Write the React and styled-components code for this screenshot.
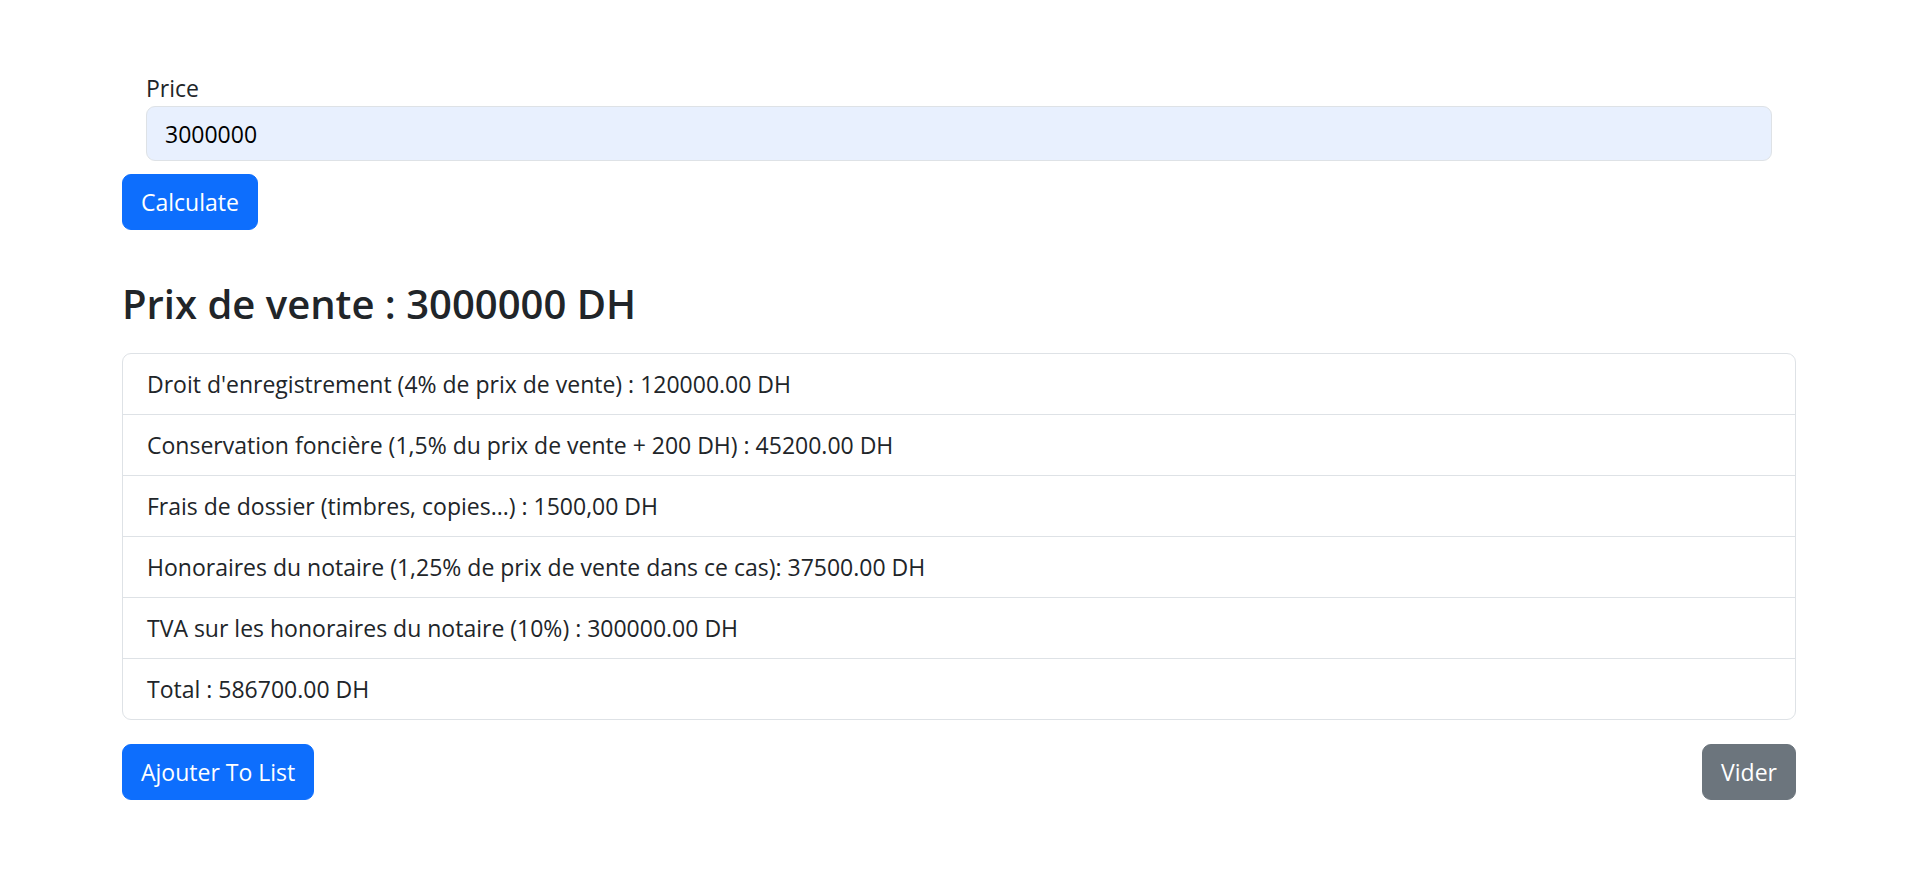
import React from "react";
import styled, { createGlobalStyle } from "styled-components";

const Global = createGlobalStyle`
  html, body { margin: 0; padding: 0; background: #fff; }
  body {
    font-family: "Open Sans", "Noto Sans", sans-serif;
    font-size: 23px;
    line-height: 1.5;
    color: #212529;
  }
  * { box-sizing: border-box; }
`;

const Container = styled.div`
  width: 1710px;
  margin: 0 auto;
  padding: 70px 18px 40px;
`;

const Field = styled.div`
  padding: 0 24px;
`;

const Label = styled.label`
  display: block;
  font-size: 23px;
  line-height: 36px;
`;

const Input = styled.input`
  display: block;
  width: 100%;
  height: 55px;
  padding: 0 18px;
  font-family: inherit;
  font-size: 23px;
  color: #000;
  background: #e8f0fe;
  border: 1px solid #dee2e6;
  border-radius: 9px;
  outline: none;
`;

const Button = styled.button`
  display: inline-flex;
  align-items: center;
  height: 56px;
  padding: 0 18px;
  font-family: inherit;
  font-size: 23px;
  color: #fff;
  background: ${(p) => (p.$variant === "secondary" ? "#6c757d" : "#0d6efd")};
  border: 1px solid ${(p) => (p.$variant === "secondary" ? "#6c757d" : "#0d6efd")};
  border-radius: 9px;
  cursor: pointer;
`;

const CalcRow = styled.div`
  margin-top: 13px;
`;

const Heading = styled.h3`
  margin: 49px 0 24px;
  font-size: 40px;
  font-weight: 600;
  line-height: 50px;
`;

const List = styled.ul`
  list-style: none;
  margin: 0;
  padding: 0;
  border: 1px solid #dee2e6;
  border-radius: 9px;
`;

const Item = styled.li`
  padding: 12px 24px;
  line-height: 36px;
  border-top: ${(p) => (p.$first ? "none" : "1px solid #dee2e6")};
`;

const Actions = styled.div`
  display: flex;
  justify-content: space-between;
  margin-top: 24px;
`;

const rows = [
  "Droit d'enregistrement (4% de prix de vente) : 120000.00 DH",
  "Conservation foncière (1,5% du prix de vente + 200 DH) : 45200.00 DH",
  "Frais de dossier (timbres, copies...) : 1500,00 DH",
  "Honoraires du notaire (1,25% de prix de vente dans ce cas): 37500.00 DH",
  "TVA sur les honoraires du notaire (10%) : 300000.00 DH",
  "Total : 586700.00 DH",
];

export default function App() {
  return (
    <>
      <Global />
      <Container>
        <Field>
          <Label htmlFor="price">Price</Label>
          <Input id="price" defaultValue="3000000" />
        </Field>
        <CalcRow>
          <Button>Calculate</Button>
        </CalcRow>
        <Heading>Prix de vente : 3000000 DH</Heading>
        <List>
          {rows.map((r, i) => (
            <Item key={i} $first={i === 0}>
              {r}
            </Item>
          ))}
        </List>
        <Actions>
          <Button>Ajouter To List</Button>
          <Button $variant="secondary">Vider</Button>
        </Actions>
      </Container>
    </>
  );
}
